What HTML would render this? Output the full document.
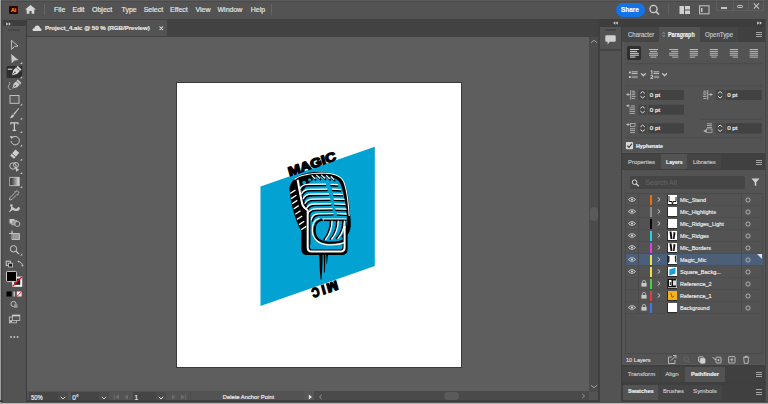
<!DOCTYPE html>
<html><head><meta charset="utf-8">
<style>
*{margin:0;padding:0;box-sizing:border-box}
html,body{width:768px;height:404px;overflow:hidden;background:#535353;font-family:"Liberation Sans",sans-serif;color:#dcdcdc}
.a{position:absolute}
.t{position:absolute;white-space:nowrap;line-height:1;-webkit-text-stroke:0.18px currentColor}
</style></head><body>
<div class="a" style="left:0;top:0;width:768px;height:404px;background:#535353"></div>

<!-- window edges -->
<div class="a" style="left:0;top:0;width:768px;height:1px;background:#5c5c5c"></div>
<div class="a" style="left:0;top:1px;width:768px;height:0.8px;background:#4a4a4a"></div>
<div class="a" style="left:0;top:0;width:1px;height:404px;background:#a0a0a0"></div>
<div class="a" style="left:1px;top:1px;width:1px;height:401px;background:#474747"></div><div class="a" style="left:2px;top:19px;width:1px;height:383px;background:#4e4e4e"></div>

<!-- MENU BAR -->
<div id="menubar">
  <div class="a" style="left:8.6px;top:6.1px;width:9.2px;height:8.4px;background:#330000;border-radius:1.2px"></div>
  <div class="t" style="left:10.9px;top:8.3px;font-size:5.2px;font-weight:bold;color:#ff9a00">Ai</div>
  <svg class="a" style="left:25.4px;top:5.4px" width="11" height="9" viewBox="0 0 11 9"><path d="M5.5 0 L11 4.6 L9.3 4.6 L9.3 8.8 L6.6 8.8 L6.6 6 L4.4 6 L4.4 8.8 L1.7 8.8 L1.7 4.6 L0 4.6 Z" fill="#d6d6d6"/></svg>
  <div class="a" style="left:44px;top:4px;width:1px;height:11px;background:#666"></div>
  <div class="t" style="left:54px;top:6px;font-size:7px;color:#e4e4e4">File</div>
  <div class="t" style="left:72.5px;top:6px;font-size:7px;color:#e4e4e4">Edit</div>
  <div class="t" style="left:92px;top:6px;font-size:7px;color:#e4e4e4">Object</div>
  <div class="t" style="left:121.5px;top:6px;font-size:7px;color:#e4e4e4">Type</div>
  <div class="t" style="left:143.7px;top:6px;font-size:7px;color:#e4e4e4">Select</div>
  <div class="t" style="left:170px;top:6px;font-size:7px;color:#e4e4e4">Effect</div>
  <div class="t" style="left:195.4px;top:6px;font-size:7px;color:#e4e4e4">View</div>
  <div class="t" style="left:217.5px;top:6px;font-size:7px;color:#e4e4e4">Window</div>
  <div class="t" style="left:250.7px;top:6px;font-size:7px;color:#e4e4e4">Help</div>
  <div class="a" style="left:271px;top:4px;width:1px;height:11px;background:#666"></div>

  <div class="a" style="left:616px;top:3px;width:29px;height:14px;background:#1473e6;border-radius:7px"></div>
  <div class="t" style="left:621.2px;top:6px;font-size:7.6px;font-weight:bold;color:#fff;transform:scaleX(0.84);transform-origin:0 0">Share</div>
  <svg class="a" style="left:648px;top:4px" width="13" height="12" viewBox="0 0 13 12"><circle cx="5.5" cy="5" r="3.6" stroke="#d0d0d0" stroke-width="1.3" fill="none"/><path d="M8 7.5 L11 10.5" stroke="#d0d0d0" stroke-width="1.5"/></svg>
  <div class="a" style="left:668px;top:4px;width:1px;height:11px;background:#606060"></div>
  <svg class="a" style="left:679px;top:5px" width="12" height="10" viewBox="0 0 12 10"><rect x="0.5" y="1" width="4.5" height="8" fill="#d0d0d0"/><rect x="6" y="1" width="5" height="3.5" fill="#d0d0d0"/><rect x="6" y="5.5" width="5" height="3.5" fill="#d0d0d0"/></svg>
  <svg class="a" style="left:699px;top:5px" width="11" height="10" viewBox="0 0 11 10"><rect x="0.6" y="0.8" width="9.4" height="8" stroke="#c8c8c8" stroke-width="1" fill="none"/><rect x="2" y="3" width="1.5" height="4" fill="#c8c8c8"/></svg>
  <div class="a" style="left:716px;top:-1px;width:48px;height:12px;border:1px solid #5e5e5e;border-top:none"></div>
  <div class="a" style="left:732.5px;top:0;width:1px;height:11px;background:#5e5e5e"></div>
  <div class="a" style="left:747.5px;top:0;width:1px;height:11px;background:#5e5e5e"></div>
  <div class="a" style="left:721.2px;top:6.9px;width:5.8px;height:1.7px;background:#c4c4c4"></div>
  <div class="a" style="left:737.1px;top:4.6px;width:6px;height:3.8px;border:1.3px solid #c4c4c4;border-radius:1.2px"></div>
  <svg class="a" style="left:752.5px;top:2.6px" width="7" height="6" viewBox="0 0 7 6"><path d="M0.8 0.4 L6 5.6 M6 0.4 L0.8 5.6" stroke="#c4c4c4" stroke-width="1.1"/></svg>
</div>



<!-- TAB BAR + CANVAS -->
<div class="a" style="left:27px;top:19px;width:571px;height:17.5px;background:#424242"></div>
<div class="a" style="left:27.3px;top:19.8px;width:140.2px;height:16.7px;background:#535353"></div>
<svg class="a" style="left:32px;top:24.6px" width="10" height="6.6" viewBox="0 0 12 8"><path d="M2.5 7.5 C0.8 7.5 0.3 6.2 0.6 5.2 C0.9 4.2 1.8 3.8 2.8 4 C3 2 4.5 0.6 6.3 0.6 C8.2 0.6 9.6 2 9.7 3.8 C11 3.9 11.7 4.9 11.6 5.9 C11.5 6.9 10.7 7.5 9.7 7.5 Z" fill="#d8d8d8"/></svg>
<div class="t" style="left:44.9px;top:24.7px;font-size:6.1px;font-weight:bold;color:#e8e8e8">Project_4.aic @ 50 % (RGB/Preview)</div>
<svg class="a" style="left:159px;top:25.8px" width="4.6" height="4.6" viewBox="0 0 5 5"><path d="M0.6 0.6 L4.4 4.4 M4.4 0.6 L0.6 4.4" stroke="#e0e0e0" stroke-width="1.1"/></svg>

<div class="a" style="left:27px;top:36.5px;width:562px;height:355px;background:#5e5e5e"></div>
<!-- artboard -->
<div class="a" style="left:176px;top:82px;width:286px;height:286px;background:#3a3a3a"></div>
<div class="a" style="left:177px;top:83px;width:284px;height:284px;background:#fff"></div>

<!-- vertical scrollbar -->
<div class="a" style="left:589px;top:36.5px;width:9px;height:355px;background:#4b4b4b"></div>
<svg class="a" style="left:590px;top:39px" width="8" height="5" viewBox="0 0 8 5"><path d="M1 3.8 L4 1.2 L7 3.8" stroke="#a8a8a8" stroke-width="0.9" fill="none"/></svg>
<div class="a" style="left:590px;top:206.5px;width:7.8px;height:14px;background:#5a5a5a;border-radius:4px"></div>
<svg class="a" style="left:590px;top:384px" width="8" height="5" viewBox="0 0 8 5"><path d="M1 1.2 L4 3.8 L7 1.2" stroke="#a8a8a8" stroke-width="0.9" fill="none"/></svg>
<div class="a" style="left:589px;top:391.5px;width:9px;height:9px;background:#535353"></div>
<div class="a" style="left:598px;top:19px;width:2px;height:383px;background:#3f3f3f"></div>

<!-- STATUS BAR -->
<div class="a" style="left:27px;top:391.2px;width:562px;height:9px;background:#4a4a4a"></div>
<div class="a" style="left:27px;top:391.2px;width:287px;height:9px;background:#535353"></div>
<div class="a" style="left:29.1px;top:392.2px;width:28.7px;height:8.4px;background:#454545"></div>
<div class="a" style="left:57.8px;top:392.2px;width:10.4px;height:8.4px;background:#4b4b4b"></div>
<div class="t" style="left:30.9px;top:395.1px;font-size:6.6px;color:#ececec;transform:scaleX(0.88);transform-origin:0 0">50%</div>
<svg class="a" style="left:59.8px;top:395.5px" width="6" height="4" viewBox="0 0 6 4"><path d="M0.8 0.8 L3 3 L5.2 0.8" stroke="#dcdcdc" stroke-width="0.9" fill="none"/></svg>
<div class="a" style="left:70.8px;top:392.2px;width:28px;height:8.4px;background:#454545"></div>
<div class="a" style="left:98.8px;top:392.2px;width:10.4px;height:8.4px;background:#4b4b4b"></div>
<div class="t" style="left:72.3px;top:395.1px;font-size:6.6px;color:#ececec">0°</div>
<svg class="a" style="left:101px;top:395.5px" width="6" height="4" viewBox="0 0 6 4"><path d="M0.8 0.8 L3 3 L5.2 0.8" stroke="#dcdcdc" stroke-width="0.9" fill="none"/></svg>
<svg class="a" style="left:113px;top:394px" width="18" height="6" viewBox="0 0 18 6"><path d="M1.3 0.5 L1.3 5.5" stroke="#6e6e6e" stroke-width="0.9"/><path d="M6 0.6 L2.5 3 L6 5.4 Z M15 0.6 L11.5 3 L15 5.4 Z" fill="#6e6e6e"/></svg>
<div class="a" style="left:133.4px;top:392.2px;width:22.8px;height:8.4px;background:#454545"></div>
<div class="a" style="left:156.2px;top:392.2px;width:9.8px;height:8.4px;background:#4b4b4b"></div>
<div class="t" style="left:134.6px;top:395.1px;font-size:6.6px;color:#ececec">1</div>
<svg class="a" style="left:158px;top:395.5px" width="6" height="4" viewBox="0 0 6 4"><path d="M0.8 0.8 L3 3 L5.2 0.8" stroke="#e8e8e8" stroke-width="1" fill="none"/></svg>
<svg class="a" style="left:171px;top:394px" width="16" height="6" viewBox="0 0 16 6"><path d="M1 0.6 L4.5 3 L1 5.4 Z M10 0.6 L13.5 3 L10 5.4 Z" fill="#6e6e6e"/><path d="M14.5 0.5 L14.5 5.5" stroke="#6e6e6e" stroke-width="0.9"/></svg>
<div class="a" style="left:190px;top:392.2px;width:1px;height:8.4px;background:#4a4a4a"></div>
<div class="t" style="left:222.8px;top:395.3px;font-size:5.8px;color:#ececec">Delete Anchor Point</div>
<div class="a" style="left:304.4px;top:391.2px;width:10px;height:9px;background:#585858"></div>
<svg class="a" style="left:307.5px;top:394px" width="5" height="6" viewBox="0 0 5 6"><path d="M0.8 0.5 L4 3 L0.8 5.5 Z" fill="#e8e8e8"/></svg>
<svg class="a" style="left:317.5px;top:393.5px" width="5" height="6" viewBox="0 0 5 6"><path d="M3.8 0.8 L1.5 3 L3.8 5.2" stroke="#a0a0a0" stroke-width="0.9" fill="none"/></svg>
<div class="a" style="left:444px;top:392.2px;width:14.5px;height:7.8px;background:#5a5a5a;border-radius:4px"></div>
<svg class="a" style="left:581px;top:393px" width="5" height="6" viewBox="0 0 5 6"><path d="M1.2 0.8 L3.5 3 L1.2 5.2" stroke="#a0a0a0" stroke-width="0.9" fill="none"/></svg>
<div class="a" style="left:0;top:400.3px;width:768px;height:2.2px;background:#3e3e3e"></div>
<div class="a" style="left:0;top:402.5px;width:768px;height:1.5px;background:#b4b4b4"></div>


<!-- RIGHT DOCK -->
<div class="a" style="left:600px;top:19px;width:168px;height:383px;background:#3f3f3f"></div>
<div class="a" style="left:600px;top:19px;width:166px;height:8px;background:#3d3d3d"></div>
<svg class="a" style="left:613.3px;top:21.2px" width="5" height="4" viewBox="0 0 5 4"><path d="M2.3 0.2 L0.2 2 L2.3 3.8 Z M4.8 0.2 L2.7 2 L4.8 3.8 Z" fill="#d0d0d0"/></svg>
<svg class="a" style="left:756.5px;top:21.2px" width="5" height="4" viewBox="0 0 5 4"><path d="M0.2 0.2 L2.3 2 L0.2 3.8 Z M2.7 0.2 L4.8 2 L2.7 3.8 Z" fill="#d0d0d0"/></svg>
<!-- collapsed column -->
<div class="a" style="left:600px;top:27px;width:21px;height:375px;background:#535353"></div>
<div class="a" style="left:605px;top:29px;width:11px;height:1.6px;background:#444"></div>
<svg class="a" style="left:605px;top:35px" width="11" height="10" viewBox="0 0 11 10"><path d="M1.3 0.3 L9.7 0.3 Q10.7 0.3 10.7 1.3 L10.7 5.8 Q10.7 6.8 9.7 6.8 L4.6 6.8 L2.6 9.8 L2.6 6.8 L1.3 6.8 Q0.3 6.8 0.3 5.8 L0.3 1.3 Q0.3 0.3 1.3 0.3 Z" fill="#d0d0d0"/></svg>
<div class="a" style="left:600px;top:49.2px;width:21px;height:1.6px;background:#444"></div>
<div class="a" style="left:621px;top:19px;width:1px;height:383px;background:#3f3f3f"></div>

<!-- right panel 1: Character/Paragraph/OpenType -->
<div class="a" style="left:622px;top:27px;width:143.5px;height:14.7px;background:#404040"></div>
<div class="a" style="left:622.2px;top:27.2px;width:36.6px;height:14.5px;background:#454545"></div>
<div class="a" style="left:658.8px;top:27.2px;width:40.8px;height:14.5px;background:#535353"></div>
<div class="a" style="left:699.6px;top:27.2px;width:38px;height:14.5px;background:#454545"></div>
<div class="t" style="left:627.7px;top:31.5px;font-size:6.4px;color:#c4c4c4;transform:scaleX(0.94);transform-origin:0 0">Character</div>
<svg class="a" style="left:661.6px;top:31.6px" width="3.6" height="5" viewBox="0 0 3.6 5"><path d="M0.5 1.9 L1.8 0.5 L3.1 1.9 M0.5 3.1 L1.8 4.5 L3.1 3.1" stroke="#b0b0b0" stroke-width="0.8" fill="none"/></svg>
<div class="t" style="left:668px;top:31.5px;font-size:6.4px;font-weight:bold;color:#f0f0f0;transform:scaleX(0.845);transform-origin:0 0">Paragraph</div>
<div class="t" style="left:704.5px;top:31.5px;font-size:6.4px;color:#c4c4c4;transform:scaleX(0.95);transform-origin:0 0">OpenType</div>
<div class="a" style="left:756px;top:31.8px;width:6px;height:5.4px;border-top:1px solid #a4a4a4;border-bottom:1px solid #a4a4a4"></div>
<div class="a" style="left:756px;top:34px;width:6px;height:1px;background:#a4a4a4"></div>
<div class="a" style="left:622px;top:41.7px;width:143.5px;height:111.6px;background:#535353"></div>


<!-- paragraph contents -->
<div class="a" style="left:623px;top:42px;width:142px;height:111px;border:1px solid #575757;border-top:none"></div>
<div class="a" style="left:627.2px;top:46px;width:13.6px;height:13.8px;background:#2f2f2f;border-radius:1.5px"></div>
<svg class="a" style="left:622px;top:42px" width="144" height="112" viewBox="622 42 144 112">
 <g fill="#dcdcdc">
  <rect x="630" y="49" width="8.9" height="1"/><rect x="630" y="50.9" width="7" height="1"/><rect x="630" y="52.8" width="8.9" height="1"/><rect x="630" y="54.7" width="8.9" height="1"/><rect x="630" y="56.6" width="5.5" height="1"/>
 </g>
 <g fill="#b8b8b8">
  <rect x="649" y="49" width="9" height="1"/><rect x="650" y="50.9" width="7" height="1"/><rect x="649" y="52.8" width="9" height="1"/><rect x="649" y="54.7" width="9" height="1"/><rect x="650.5" y="56.6" width="6" height="1"/>
  <rect x="669.2" y="49" width="9" height="1"/><rect x="671.2" y="50.9" width="7" height="1"/><rect x="669.2" y="52.8" width="9" height="1"/><rect x="669.2" y="54.7" width="9" height="1"/><rect x="672.2" y="56.6" width="6" height="1"/>
  <rect x="689.7" y="49" width="8.3" height="1"/><rect x="689.7" y="50.9" width="8.3" height="1"/><rect x="689.7" y="52.8" width="8.3" height="1"/><rect x="689.7" y="54.7" width="8.3" height="1"/><rect x="689.7" y="56.6" width="5.5" height="1"/>
  <rect x="709.8" y="49" width="8.1" height="1"/><rect x="709.8" y="50.9" width="8.1" height="1"/><rect x="709.8" y="52.8" width="8.1" height="1"/><rect x="709.8" y="54.7" width="8.1" height="1"/><rect x="711.2" y="56.6" width="5.5" height="1"/>
  <rect x="729.8" y="49" width="8.2" height="1"/><rect x="729.8" y="50.9" width="8.2" height="1"/><rect x="729.8" y="52.8" width="8.2" height="1"/><rect x="729.8" y="54.7" width="8.2" height="1"/><rect x="732.5" y="56.6" width="5.5" height="1"/>
  <rect x="749.6" y="49" width="8.4" height="1"/><rect x="749.6" y="50.9" width="8.4" height="1"/><rect x="749.6" y="52.8" width="8.4" height="1"/><rect x="749.6" y="54.7" width="8.4" height="1"/><rect x="749.6" y="56.6" width="8.4" height="1"/>
 </g>
 <rect x="625" y="63.2" width="137" height="0.9" fill="#4a4a4a"/>
 <!-- bullets -->
 <g fill="#cfcfcf">
  <rect x="629" y="71.6" width="1.8" height="1.8"/><rect x="631.6" y="71.4" width="6" height="0.9"/><rect x="631.6" y="73.2" width="6" height="0.9"/>
  <rect x="629" y="76.2" width="1.8" height="1.8"/><rect x="631.6" y="75.8" width="6" height="2.4" fill="#8e8e8e"/>
  <path d="M641 73.3 L643.4 75.6 L645.8 73.3" stroke="#d8d8d8" stroke-width="1.15" fill="none"/>
  <path d="M650.6 71.2 L651.9 70.5 L651.9 74.2" stroke="#d8d8d8" stroke-width="0.9" fill="none"/>
  <rect x="653.6" y="71.4" width="5.5" height="0.9"/><rect x="653.6" y="73.2" width="5.5" height="0.9"/>
  <path d="M650.5 75.6 Q652.7 74.4 652.7 76 Q652.7 77 650.6 78.3 L653 78.3" stroke="#d8d8d8" stroke-width="0.9" fill="none"/>
  <rect x="653.6" y="75.8" width="5.5" height="2.4" fill="#8e8e8e"/>
  <path d="M662.2 73.3 L664.6 75.6 L667 73.3" stroke="#d8d8d8" stroke-width="1.15" fill="none"/>
 </g>
 <rect x="625" y="85.4" width="137" height="0.9" fill="#4a4a4a"/>
 <!-- fields -->
 <g fill="#464646">
  <rect x="638.2" y="89.9" width="8.9" height="10"/><rect x="638.2" y="104.8" width="8.9" height="10"/><rect x="638.2" y="123.3" width="8.9" height="10.1"/>
  <rect x="715.7" y="89.9" width="9" height="10"/><rect x="715.7" y="123.3" width="9" height="10.1"/>
 </g>
 <g fill="#424242">
  <rect x="648.4" y="89.9" width="35.6" height="10" rx="0.8"/><rect x="648.4" y="104.8" width="35.6" height="10" rx="0.8"/><rect x="648.4" y="123.3" width="35.6" height="10.1" rx="0.8"/>
  <rect x="725.8" y="89.9" width="36" height="10" rx="0.8"/><rect x="725.8" y="123.3" width="36" height="10.1" rx="0.8"/>
 </g>
 <g stroke="#e4e4e4" stroke-width="0.95" fill="none">
  <path d="M640.4 93.4 L642.6 91.6 L644.8 93.4 M640.4 96.2 L642.6 98 L644.8 96.2"/>
  <path d="M640.4 108.3 L642.6 106.5 L644.8 108.3 M640.4 111.1 L642.6 112.9 L644.8 111.1"/>
  <path d="M640.4 126.8 L642.6 125 L644.8 126.8 M640.4 129.6 L642.6 131.4 L644.8 129.6"/>
  <path d="M717.9 93.4 L720.1 91.6 L722.3 93.4 M717.9 96.2 L720.1 98 L722.3 96.2"/>
  <path d="M717.9 126.8 L720.1 125 L722.3 126.8 M717.9 129.6 L720.1 131.4 L722.3 129.6"/>
 </g>
 <!-- indent icons -->
 <g fill="#bdbdbd">
  <path d="M626 94.5 L628.5 93 L628.5 96 Z"/><rect x="628" y="94.1" width="2" height="0.8"/><rect x="630.3" y="90.3" width="0.9" height="9.3"/>
  <rect x="632" y="90.8" width="3" height="0.8"/><rect x="632" y="92.6" width="3.5" height="0.8"/><rect x="632" y="94.4" width="3" height="0.8"/><rect x="632" y="96.2" width="3.5" height="0.8"/><rect x="632" y="98" width="3" height="0.8"/>

  <path d="M626 105.8 L628.5 104.3 L628.5 107.3 Z"/><rect x="628" y="105.4" width="2" height="0.8"/><rect x="631" y="105.5" width="4" height="0.8"/>
  <rect x="629.5" y="107.5" width="5.5" height="0.8"/><rect x="629.5" y="109.3" width="5.5" height="0.8"/><rect x="629.5" y="111.1" width="5.5" height="0.8"/><rect x="629.5" y="112.9" width="5.5" height="0.8"/>

  <path d="M626 124.6 L628.5 123.1 L628.5 126.1 Z"/><rect x="628" y="124.2" width="2" height="0.8"/><rect x="630.5" y="123.4" width="4.5" height="3" fill="none" stroke="#bdbdbd" stroke-width="0.7"/>
  <rect x="630" y="128.4" width="5" height="0.8"/><rect x="630" y="130.2" width="5" height="0.8"/><rect x="630" y="132" width="5" height="0.8"/>

  <rect x="703.4" y="90.8" width="3" height="0.8"/><rect x="703" y="92.6" width="3.5" height="0.8"/><rect x="703.4" y="94.4" width="3" height="0.8"/><rect x="703" y="96.2" width="3.5" height="0.8"/><rect x="703.4" y="98" width="3" height="0.8"/>
  <rect x="707.3" y="90.3" width="0.9" height="9.3"/><rect x="708.5" y="94.1" width="2.2" height="0.8"/><path d="M712.9 94.5 L710.4 93 L710.4 96 Z"/>

  <rect x="707" y="123.4" width="5" height="0.8"/><rect x="707" y="125.2" width="5" height="0.8"/><rect x="707" y="127" width="5" height="0.8"/>
  <rect x="706.5" y="129" width="5.5" height="3.3" fill="none" stroke="#bdbdbd" stroke-width="0.7"/>
  <path d="M703.3 131 L705.8 129.5 L705.8 132.5 Z"/><rect x="705.5" y="130.6" width="1.2" height="0.8"/>
 </g>
 <rect x="700" y="118.8" width="62" height="0.9" fill="#4c4c4c"/>
 <rect x="625" y="137.3" width="137" height="0.9" fill="#4a4a4a"/>
 <!-- checkbox -->
 <rect x="625.9" y="142" width="7.2" height="7.3" rx="1" fill="#d8d8d8"/>
 <path d="M627.3 145.6 L629 147.4 L631.9 143.6" stroke="#3a3a3a" stroke-width="1.1" fill="none"/>
</svg>
<div class="t" style="left:649.8px;top:91.8px;font-size:6.2px;color:#f8f8f8">0 pt</div>
<div class="t" style="left:649.8px;top:106.7px;font-size:6.2px;color:#f8f8f8">0 pt</div>
<div class="t" style="left:649.8px;top:125.3px;font-size:6.2px;color:#f8f8f8">0 pt</div>
<div class="t" style="left:727.2px;top:91.8px;font-size:6.2px;color:#f8f8f8">0 pt</div>
<div class="t" style="left:727.2px;top:125.3px;font-size:6.2px;color:#f8f8f8">0 pt</div>
<div class="t" style="left:636px;top:143px;font-size:6.2px;font-weight:bold;color:#f0f0f0;transform:scaleX(0.85);transform-origin:0 0">Hyphenate</div>


<!-- LAYERS PANEL -->
<div class="a" style="left:622.2px;top:154.4px;width:143.3px;height:15.1px;background:#404040"></div>
<div class="a" style="left:622.9px;top:154.4px;width:38.1px;height:15.1px;background:#454545"></div>
<div class="a" style="left:661px;top:154.4px;width:26.3px;height:15.1px;background:#535353"></div>
<div class="a" style="left:687.3px;top:154.4px;width:33.6px;height:15.1px;background:#454545"></div>
<div class="t" style="left:627.8px;top:158.8px;font-size:6.2px;color:#c4c4c4;transform:scaleX(0.96);transform-origin:0 0">Properties</div>
<div class="t" style="left:665.9px;top:158.8px;font-size:6.2px;font-weight:bold;color:#f0f0f0;transform:scaleX(0.84);transform-origin:0 0">Layers</div>
<div class="t" style="left:692.8px;top:158.8px;font-size:6.2px;color:#c4c4c4;transform:scaleX(0.96);transform-origin:0 0">Libraries</div>
<div class="a" style="left:755.7px;top:159.7px;width:6.4px;height:5.5px;border-top:1px solid #a4a4a4;border-bottom:1px solid #a4a4a4"></div>
<div class="a" style="left:755.7px;top:162px;width:6.4px;height:1px;background:#a4a4a4"></div>
<div class="a" style="left:622.2px;top:169.5px;width:143.3px;height:195.2px;background:#535353"></div>
<div class="a" style="left:623px;top:169.5px;width:142px;height:195px;border:1px solid #575757;border-top:none"></div>
<div class="a" style="left:629.7px;top:175.9px;width:115.3px;height:12.7px;background:#454545;border-radius:1.5px"></div>
<svg class="a" style="left:631px;top:179px" width="10" height="8" viewBox="0 0 10 8"><circle cx="3.6" cy="3.2" r="2.3" stroke="#d8d8d8" stroke-width="1" fill="none"/><path d="M5.2 4.8 L7.8 7.3" stroke="#d8d8d8" stroke-width="1.3"/></svg>
<div class="t" style="left:645.3px;top:179px;font-size:7px;color:#606060">Search All</div>
<svg class="a" style="left:751px;top:178px" width="9" height="9" viewBox="0 0 9 9"><path d="M0.5 0.5 L8.5 0.5 L5.3 4.3 L5.3 8.3 L3.7 7.3 L3.7 4.3 Z" fill="#d0d0d0"/></svg>
<div class="a" style="left:625px;top:193.3px;width:137.6px;height:161px;border:1px solid #4a4a4a"></div>

<div class="a" style="left:625.5px;top:205.0px;width:137px;height:0.8px;background:#4e4e4e"></div>
<svg class="a" style="left:627.5px;top:196.9px" width="8" height="5" viewBox="0 0 8 5"><path d="M0.4 2.5 Q4 -1.2 7.6 2.5 Q4 6.2 0.4 2.5 Z" fill="none" stroke="#d0d0d0" stroke-width="0.9"/><circle cx="4" cy="2.5" r="1.1" fill="#d0d0d0"/></svg>
<div class="a" style="left:650.4px;top:195.0px;width:1.7px;height:9.5px;background:#f26d00"></div>
<svg class="a" style="left:656.5px;top:197.0px" width="4" height="5" viewBox="0 0 4 5"><path d="M0.6 0.4 L3.1 2.5 L0.6 4.6" stroke="#d4d4d4" stroke-width="0.9" fill="none"/></svg>
<div class="a" style="left:667.4px;top:194.6px;width:10px;height:10px;background:#2a2a2a"></div>
<div class="a" style="left:668.2px;top:195.4px;width:8.4px;height:8.4px;background:#fff"></div>
<svg class="a" style="left:668.2px;top:195.4px" width="9" height="9" viewBox="0 0 9 9"><path d="M1 1 L1 6.5 L4 6.5 L4 8.4 L5 8.4 L5 6.5 L8 6.5 L8 2" stroke="#111" stroke-width="1" fill="none"/></svg>
<div class="t" style="left:680px;top:197.1px;font-size:6px;color:#ececec;transform:scaleX(0.92);transform-origin:0 0">Mic_Stand</div>
<div class="a" style="left:741.3px;top:193.5px;width:0.8px;height:11.5px;background:#4a4a4a"></div>
<svg class="a" style="left:744.8px;top:196.8px" width="6" height="6" viewBox="0 0 6 6"><circle cx="3" cy="3" r="2.1" stroke="#c8c8c8" stroke-width="0.8" fill="none"/></svg>
<div class="a" style="left:625.5px;top:217.0px;width:137px;height:0.8px;background:#4e4e4e"></div>
<svg class="a" style="left:627.5px;top:208.9px" width="8" height="5" viewBox="0 0 8 5"><path d="M0.4 2.5 Q4 -1.2 7.6 2.5 Q4 6.2 0.4 2.5 Z" fill="none" stroke="#d0d0d0" stroke-width="0.9"/><circle cx="4" cy="2.5" r="1.1" fill="#d0d0d0"/></svg>
<div class="a" style="left:650.4px;top:207.0px;width:1.7px;height:9.5px;background:#8a8a8a"></div>
<svg class="a" style="left:656.5px;top:209.0px" width="4" height="5" viewBox="0 0 4 5"><path d="M0.6 0.4 L3.1 2.5 L0.6 4.6" stroke="#d4d4d4" stroke-width="0.9" fill="none"/></svg>
<div class="a" style="left:667.4px;top:206.6px;width:10px;height:10px;background:#2a2a2a"></div>
<div class="a" style="left:668.2px;top:207.4px;width:8.4px;height:8.4px;background:#fff"></div>
<div class="t" style="left:680px;top:209.1px;font-size:6px;color:#ececec;transform:scaleX(0.92);transform-origin:0 0">Mic_Highlights</div>
<div class="a" style="left:741.3px;top:205.5px;width:0.8px;height:11.5px;background:#4a4a4a"></div>
<svg class="a" style="left:744.8px;top:208.8px" width="6" height="6" viewBox="0 0 6 6"><circle cx="3" cy="3" r="2.1" stroke="#c8c8c8" stroke-width="0.8" fill="none"/></svg>
<div class="a" style="left:625.5px;top:229.0px;width:137px;height:0.8px;background:#4e4e4e"></div>
<svg class="a" style="left:627.5px;top:220.9px" width="8" height="5" viewBox="0 0 8 5"><path d="M0.4 2.5 Q4 -1.2 7.6 2.5 Q4 6.2 0.4 2.5 Z" fill="none" stroke="#d0d0d0" stroke-width="0.9"/><circle cx="4" cy="2.5" r="1.1" fill="#d0d0d0"/></svg>
<div class="a" style="left:650.4px;top:219.0px;width:1.7px;height:9.5px;background:#0a0a0a"></div>
<svg class="a" style="left:656.5px;top:221.0px" width="4" height="5" viewBox="0 0 4 5"><path d="M0.6 0.4 L3.1 2.5 L0.6 4.6" stroke="#d4d4d4" stroke-width="0.9" fill="none"/></svg>
<div class="a" style="left:667.4px;top:218.6px;width:10px;height:10px;background:#2a2a2a"></div>
<div class="a" style="left:668.2px;top:219.4px;width:8.4px;height:8.4px;background:#fff"></div>
<div class="t" style="left:680px;top:221.1px;font-size:6px;color:#ececec;transform:scaleX(0.92);transform-origin:0 0">Mic_Ridges_Light</div>
<div class="a" style="left:741.3px;top:217.5px;width:0.8px;height:11.5px;background:#4a4a4a"></div>
<svg class="a" style="left:744.8px;top:220.8px" width="6" height="6" viewBox="0 0 6 6"><circle cx="3" cy="3" r="2.1" stroke="#c8c8c8" stroke-width="0.8" fill="none"/></svg>
<div class="a" style="left:625.5px;top:241.0px;width:137px;height:0.8px;background:#4e4e4e"></div>
<svg class="a" style="left:627.5px;top:232.9px" width="8" height="5" viewBox="0 0 8 5"><path d="M0.4 2.5 Q4 -1.2 7.6 2.5 Q4 6.2 0.4 2.5 Z" fill="none" stroke="#d0d0d0" stroke-width="0.9"/><circle cx="4" cy="2.5" r="1.1" fill="#d0d0d0"/></svg>
<div class="a" style="left:650.4px;top:231.0px;width:1.7px;height:9.5px;background:#22d3f0"></div>
<svg class="a" style="left:656.5px;top:233.0px" width="4" height="5" viewBox="0 0 4 5"><path d="M0.6 0.4 L3.1 2.5 L0.6 4.6" stroke="#d4d4d4" stroke-width="0.9" fill="none"/></svg>
<div class="a" style="left:667.4px;top:230.6px;width:10px;height:10px;background:#2a2a2a"></div>
<div class="a" style="left:668.2px;top:231.4px;width:8.4px;height:8.4px;background:#fff"></div>
<svg class="a" style="left:668.2px;top:231.4px" width="9" height="9" viewBox="0 0 9 9"><path d="M1.5 0.5 L3.5 0.5 L4.5 8 L2.5 8 Z M5.5 1 L7.5 1.5 L6.5 8 L5 8 Z" fill="#111"/></svg>
<div class="t" style="left:680px;top:233.1px;font-size:6px;color:#ececec;transform:scaleX(0.92);transform-origin:0 0">Mic_Ridges</div>
<div class="a" style="left:741.3px;top:229.5px;width:0.8px;height:11.5px;background:#4a4a4a"></div>
<svg class="a" style="left:744.8px;top:232.8px" width="6" height="6" viewBox="0 0 6 6"><circle cx="3" cy="3" r="2.1" stroke="#c8c8c8" stroke-width="0.8" fill="none"/></svg>
<div class="a" style="left:625.5px;top:253.0px;width:137px;height:0.8px;background:#4e4e4e"></div>
<svg class="a" style="left:627.5px;top:244.9px" width="8" height="5" viewBox="0 0 8 5"><path d="M0.4 2.5 Q4 -1.2 7.6 2.5 Q4 6.2 0.4 2.5 Z" fill="none" stroke="#d0d0d0" stroke-width="0.9"/><circle cx="4" cy="2.5" r="1.1" fill="#d0d0d0"/></svg>
<div class="a" style="left:650.4px;top:243.0px;width:1.7px;height:9.5px;background:#e83ae8"></div>
<svg class="a" style="left:656.5px;top:245.0px" width="4" height="5" viewBox="0 0 4 5"><path d="M0.6 0.4 L3.1 2.5 L0.6 4.6" stroke="#d4d4d4" stroke-width="0.9" fill="none"/></svg>
<div class="a" style="left:667.4px;top:242.6px;width:10px;height:10px;background:#2a2a2a"></div>
<div class="a" style="left:668.2px;top:243.4px;width:8.4px;height:8.4px;background:#fff"></div>
<svg class="a" style="left:668.2px;top:243.4px" width="9" height="9" viewBox="0 0 9 9"><path d="M1.5 0.5 L3.5 0.5 L4.5 8 L2.5 8 Z M5.5 1 L7.5 1.5 L6.5 8 L5 8 Z" fill="#111"/></svg>
<div class="t" style="left:680px;top:245.1px;font-size:6px;color:#ececec;transform:scaleX(0.92);transform-origin:0 0">Mic_Borders</div>
<div class="a" style="left:741.3px;top:241.5px;width:0.8px;height:11.5px;background:#4a4a4a"></div>
<svg class="a" style="left:744.8px;top:244.8px" width="6" height="6" viewBox="0 0 6 6"><circle cx="3" cy="3" r="2.1" stroke="#c8c8c8" stroke-width="0.8" fill="none"/></svg>
<div class="a" style="left:625.5px;top:253.5px;width:137px;height:12px;background:#4b5f78"></div>
<svg class="a" style="left:757px;top:253.5px" width="5" height="5" viewBox="0 0 5 5"><path d="M0 0 L5 0 L5 5 Z" fill="#e0e0e0"/></svg>
<div class="a" style="left:625.5px;top:265.0px;width:137px;height:0.8px;background:#4e4e4e"></div>
<svg class="a" style="left:627.5px;top:256.9px" width="8" height="5" viewBox="0 0 8 5"><path d="M0.4 2.5 Q4 -1.2 7.6 2.5 Q4 6.2 0.4 2.5 Z" fill="none" stroke="#d0d0d0" stroke-width="0.9"/><circle cx="4" cy="2.5" r="1.1" fill="#d0d0d0"/></svg>
<div class="a" style="left:650.4px;top:255.0px;width:1.7px;height:9.5px;background:#f0e040"></div>
<svg class="a" style="left:656.5px;top:257.0px" width="4" height="5" viewBox="0 0 4 5"><path d="M0.6 0.4 L3.1 2.5 L0.6 4.6" stroke="#d4d4d4" stroke-width="0.9" fill="none"/></svg>
<div class="a" style="left:667.4px;top:254.6px;width:10px;height:10px;background:#2a2a2a"></div>
<div class="a" style="left:668.2px;top:255.4px;width:8.4px;height:8.4px;background:#fff"></div>
<svg class="a" style="left:668.2px;top:255.4px" width="9" height="9" viewBox="0 0 9 9"><path d="M0 0.5 L1.6 1.5 L1.4 7 L0 8 Z M8.4 0 L6.8 1 L7 6.5 L8.4 8 Z" fill="#222"/></svg>
<div class="t" style="left:680px;top:257.1px;font-size:6px;color:#ececec;transform:scaleX(0.92);transform-origin:0 0">Magic_Mic</div>
<div class="a" style="left:741.3px;top:253.5px;width:0.8px;height:11.5px;background:#4a4a4a"></div>
<svg class="a" style="left:744.8px;top:256.8px" width="6" height="6" viewBox="0 0 6 6"><circle cx="3" cy="3" r="2.1" stroke="#c8c8c8" stroke-width="0.8" fill="none"/></svg>
<div class="a" style="left:625.5px;top:277.0px;width:137px;height:0.8px;background:#4e4e4e"></div>
<svg class="a" style="left:627.5px;top:268.9px" width="8" height="5" viewBox="0 0 8 5"><path d="M0.4 2.5 Q4 -1.2 7.6 2.5 Q4 6.2 0.4 2.5 Z" fill="none" stroke="#d0d0d0" stroke-width="0.9"/><circle cx="4" cy="2.5" r="1.1" fill="#d0d0d0"/></svg>
<div class="a" style="left:650.4px;top:267.0px;width:1.7px;height:9.5px;background:#f0e040"></div>
<svg class="a" style="left:656.5px;top:269.0px" width="4" height="5" viewBox="0 0 4 5"><path d="M0.6 0.4 L3.1 2.5 L0.6 4.6" stroke="#d4d4d4" stroke-width="0.9" fill="none"/></svg>
<div class="a" style="left:667.4px;top:266.6px;width:10px;height:10px;background:#2a2a2a"></div>
<div class="a" style="left:668.2px;top:267.4px;width:8.4px;height:8.4px;background:#fff"></div>
<svg class="a" style="left:668.2px;top:267.4px" width="9" height="9" viewBox="0 0 9 9"><path d="M1.3 2.5 L7.5 0.5 L7.5 6.5 L1.3 8.4 Z" fill="#1ba1d6"/></svg>
<div class="t" style="left:680px;top:269.1px;font-size:6px;color:#ececec;transform:scaleX(0.92);transform-origin:0 0">Square_Backg...</div>
<div class="a" style="left:741.3px;top:265.5px;width:0.8px;height:11.5px;background:#4a4a4a"></div>
<svg class="a" style="left:744.8px;top:268.8px" width="6" height="6" viewBox="0 0 6 6"><circle cx="3" cy="3" r="2.1" stroke="#c8c8c8" stroke-width="0.8" fill="none"/></svg>
<div class="a" style="left:625.5px;top:289.0px;width:137px;height:0.8px;background:#4e4e4e"></div>
<svg class="a" style="left:640.8px;top:280.1px" width="6" height="7" viewBox="0 0 6 7"><path d="M1.4 3 L1.4 2 Q1.4 0.4 3 0.4 Q4.6 0.4 4.6 2 L4.6 3" stroke="#c8c8c8" stroke-width="0.8" fill="none"/><rect x="0.4" y="3" width="5.2" height="3.6" fill="#c8c8c8"/></svg>
<div class="a" style="left:650.4px;top:279.0px;width:1.7px;height:9.5px;background:#3ad83a"></div>
<svg class="a" style="left:656.5px;top:281.0px" width="4" height="5" viewBox="0 0 4 5"><path d="M0.6 0.4 L3.1 2.5 L0.6 4.6" stroke="#d4d4d4" stroke-width="0.9" fill="none"/></svg>
<div class="a" style="left:667.4px;top:278.6px;width:10px;height:10px;background:#2a2a2a"></div>
<div class="a" style="left:668.2px;top:279.4px;width:8.4px;height:8.4px;background:#fff"></div>
<svg class="a" style="left:668.2px;top:279.4px" width="9" height="9" viewBox="0 0 9 9"><rect x="0" y="0" width="8.4" height="8.4" fill="#111"/><rect x="1" y="1" width="2.5" height="6" fill="#fff"/><rect x="5" y="1.5" width="3" height="5" fill="#ddd"/><rect x="1.8" y="3" width="1" height="3" fill="#111"/></svg>
<div class="t" style="left:680px;top:281.1px;font-size:6px;color:#ececec;transform:scaleX(0.92);transform-origin:0 0">Reference_2</div>
<div class="a" style="left:741.3px;top:277.5px;width:0.8px;height:11.5px;background:#4a4a4a"></div>
<svg class="a" style="left:744.8px;top:280.8px" width="6" height="6" viewBox="0 0 6 6"><circle cx="3" cy="3" r="2.1" stroke="#c8c8c8" stroke-width="0.8" fill="none"/></svg>
<div class="a" style="left:625.5px;top:301.0px;width:137px;height:0.8px;background:#4e4e4e"></div>
<svg class="a" style="left:640.8px;top:292.1px" width="6" height="7" viewBox="0 0 6 7"><path d="M1.4 3 L1.4 2 Q1.4 0.4 3 0.4 Q4.6 0.4 4.6 2 L4.6 3" stroke="#c8c8c8" stroke-width="0.8" fill="none"/><rect x="0.4" y="3" width="5.2" height="3.6" fill="#c8c8c8"/></svg>
<div class="a" style="left:650.4px;top:291.0px;width:1.7px;height:9.5px;background:#e83a3a"></div>
<svg class="a" style="left:656.5px;top:293.0px" width="4" height="5" viewBox="0 0 4 5"><path d="M0.6 0.4 L3.1 2.5 L0.6 4.6" stroke="#d4d4d4" stroke-width="0.9" fill="none"/></svg>
<div class="a" style="left:667.4px;top:290.6px;width:10px;height:10px;background:#2a2a2a"></div>
<div class="a" style="left:668.2px;top:291.4px;width:8.4px;height:8.4px;background:#f5b21a"></div>
<svg class="a" style="left:668.2px;top:291.4px" width="9" height="9" viewBox="0 0 9 9"><path d="M3 2 L4 6.5 L6 5" stroke="#7a4a00" stroke-width="0.8" fill="none"/></svg>
<div class="t" style="left:680px;top:293.1px;font-size:6px;color:#ececec;transform:scaleX(0.92);transform-origin:0 0">Reference_1</div>
<div class="a" style="left:741.3px;top:289.5px;width:0.8px;height:11.5px;background:#4a4a4a"></div>
<svg class="a" style="left:744.8px;top:292.8px" width="6" height="6" viewBox="0 0 6 6"><circle cx="3" cy="3" r="2.1" stroke="#c8c8c8" stroke-width="0.8" fill="none"/></svg>
<div class="a" style="left:625.5px;top:313.0px;width:137px;height:0.8px;background:#4e4e4e"></div>
<svg class="a" style="left:627.5px;top:304.9px" width="8" height="5" viewBox="0 0 8 5"><path d="M0.4 2.5 Q4 -1.2 7.6 2.5 Q4 6.2 0.4 2.5 Z" fill="none" stroke="#d0d0d0" stroke-width="0.9"/><circle cx="4" cy="2.5" r="1.1" fill="#d0d0d0"/></svg>
<svg class="a" style="left:640.8px;top:304.1px" width="6" height="7" viewBox="0 0 6 7"><path d="M1.4 3 L1.4 2 Q1.4 0.4 3 0.4 Q4.6 0.4 4.6 2 L4.6 3" stroke="#c8c8c8" stroke-width="0.8" fill="none"/><rect x="0.4" y="3" width="5.2" height="3.6" fill="#c8c8c8"/></svg>
<div class="a" style="left:650.4px;top:303.0px;width:1.7px;height:9.5px;background:#3a7ae8"></div>
<div class="a" style="left:667.4px;top:302.6px;width:10px;height:10px;background:#2a2a2a"></div>
<div class="a" style="left:668.2px;top:303.4px;width:8.4px;height:8.4px;background:#fff"></div>
<div class="t" style="left:680px;top:305.1px;font-size:6px;color:#ececec;transform:scaleX(0.92);transform-origin:0 0">Background</div>
<div class="a" style="left:741.3px;top:301.5px;width:0.8px;height:11.5px;background:#4a4a4a"></div>
<svg class="a" style="left:744.8px;top:304.8px" width="6" height="6" viewBox="0 0 6 6"><circle cx="3" cy="3" r="2.1" stroke="#c8c8c8" stroke-width="0.8" fill="none"/></svg>
<div class="a" style="left:637.5px;top:193.5px;width:0.8px;height:120px;background:#4a4a4a"></div>

<div class="t" style="left:626px;top:358px;font-size:5.6px;color:#dcdcdc">10 Layers</div>
<svg class="a" style="left:622px;top:350px" width="144" height="16" viewBox="622 350 144 16">
 <g stroke="#cfcfcf" stroke-width="0.8" fill="none">
  <path d="M672 357 L668.5 357 L668.5 363.5 L675 363.5 L675 360"/><path d="M671 360.5 L675.8 355.7 M673 355.5 L676 355.5 L676 358.5"/>
  <circle cx="686.3" cy="359" r="2.3" stroke="#6a6a6a"/><path d="M688 360.8 L690.2 363" stroke="#6a6a6a" stroke-width="1"/>
  <rect x="698.5" y="356.8" width="4.8" height="4.8" rx="0.6"/><rect x="700.2" y="358.4" width="4.8" height="4.8" rx="0.6" fill="#cfcfcf"/>
  <path d="M712.8 357 L714.8 359.5 L716 359.5"/><rect x="716" y="357.2" width="5" height="5.8" rx="0.6"/><path d="M718.5 359 L718.5 361.2 M717.4 360.1 L719.6 360.1"/>
  <rect x="728.6" y="356.6" width="6.4" height="6.4" rx="0.6"/><path d="M731.8 358.2 L731.8 361.4 M730.2 359.8 L733.4 359.8"/>
  <path d="M743 357.3 L749.3 357.3 M745 357.3 L745 356.3 L747.3 356.3 L747.3 357.3 M743.8 358.3 L744.3 363.3 L748 363.3 L748.5 358.3"/>
 </g>
</svg>
<div class="a" style="left:622.2px;top:366.5px;width:143.3px;height:15.4px;background:#404040"></div>
<div class="a" style="left:622.7px;top:366.5px;width:37.5px;height:15.4px;background:#454545"></div>
<div class="a" style="left:661px;top:366.5px;width:24.3px;height:15.4px;background:#454545"></div>
<div class="a" style="left:685.3px;top:366.5px;width:39.5px;height:15.4px;background:#535353"></div>
<div class="t" style="left:627.7px;top:371.2px;font-size:6.1px;color:#c4c4c4">Transform</div>
<div class="t" style="left:665.20px;top:371.2px;font-size:6.1px;color:#c4c4c4">Align</div>
<div class="t" style="left:690.8px;top:371.2px;font-size:6.1px;font-weight:bold;color:#f0f0f0;transform:scaleX(0.93);transform-origin:0 0">Pathfinder</div>
<div class="a" style="left:756.1px;top:371.5px;width:6.1px;height:5.5px;border-top:1px solid #a4a4a4;border-bottom:1px solid #a4a4a4"></div>
<div class="a" style="left:756.1px;top:373.8px;width:6.1px;height:1px;background:#a4a4a4"></div>
<div class="a" style="left:622.2px;top:384.5px;width:143.3px;height:15.6px;background:#404040"></div>
<div class="a" style="left:622.7px;top:384.7px;width:35.3px;height:15.4px;background:#535353"></div>
<div class="a" style="left:658px;top:384.7px;width:30.9px;height:15.4px;background:#454545"></div>
<div class="a" style="left:688.9px;top:384.7px;width:33.6px;height:15.4px;background:#454545"></div>
<div class="t" style="left:627.5px;top:388.40px;font-size:6.1px;font-weight:bold;color:#f0f0f0;transform:scaleX(0.91);transform-origin:0 0">Swatches</div>
<div class="t" style="left:662.8px;top:388.40px;font-size:6.1px;color:#c4c4c4;transform:scaleX(0.93);transform-origin:0 0">Brushes</div>
<div class="t" style="left:693.20px;top:388.40px;font-size:6.1px;color:#c4c4c4;transform:scaleX(1.02);transform-origin:0 0">Symbols</div>
<div class="a" style="left:756.1px;top:389.3px;width:6.1px;height:5.5px;border-top:1px solid #a4a4a4;border-bottom:1px solid #a4a4a4"></div>
<div class="a" style="left:756.1px;top:391.6px;width:6.1px;height:1px;background:#a4a4a4"></div>
<div class="a" style="left:765.2px;top:19px;width:1px;height:383px;background:#454545"></div>
<div class="a" style="left:766.2px;top:0;width:1.8px;height:402px;background:#525252"></div>


<!-- ARTWORK -->
<svg class="a" style="left:177px;top:83px" width="284" height="284" viewBox="177 83 284 284">
 <path d="M260.5 186.4 L374.8 146.7 L374.8 265.9 L260.5 305.9 Z" fill="#02a3d2"/>
 <!-- MAGIC -->
 <text x="0" y="0" transform="matrix(0.945,-0.327,0.27,0.963,289.4,176.3)" font-family="Liberation Sans" font-weight="bold" font-size="12.6" textLength="50" lengthAdjust="spacingAndGlyphs" fill="#000" stroke="#000" stroke-width="1.35" stroke-linejoin="round">MAGIC</text>
 <!-- MIC upside down -->
 <g transform="matrix(-0.945,0.327,-0.27,-0.963,336.6,280.4)" font-family="Liberation Sans" font-weight="bold" font-size="13" fill="#000" stroke="#000" stroke-width="1.3" stroke-linejoin="round">
  <text x="0" y="0" transform="scale(1.05,1)">M</text>
  <text x="13.4" y="0">I</text>
  <text x="0" y="0" transform="translate(19.6,0) scale(0.82,1)">C</text>
 </g>
 <!-- stand -->
 <path d="M319.2 254 L322.6 254 L322.2 270 L321.4 279.5 L320.6 279.5 L319.8 270 Z" fill="#000"/>
 <path d="M323.6 254 L325.4 254 L325 272.5 L324.2 272.5 Z" fill="#000"/>
 <path d="M326.2 254 L328 254 L327 264 L326.6 264 Z" fill="#000"/>
 <!-- head silhouette -->
 <path d="M289.3 190 C290.2 180.5 296.5 174.8 310 172.5 C323 171.2 337.5 172.6 343.8 181 C348.2 189 349.5 205 350.8 222 C351.2 228 349.5 232 347.6 235 L347.6 249 Q347.6 255 341.5 255 L307.5 255 Q301.3 255 301.3 249 L301.3 231 C296 222 291.5 208 289.5 190 Z" fill="#000"/>
 <!-- white rim along top/right -->
 <path d="M294.5 179.5 C299 175.5 308 173.4 322 173 C334 173 340.5 175.5 343.6 181.5 C346.5 188 348.2 200 349.2 216" stroke="#fff" stroke-width="1.1" fill="none"/>
 <!-- front face blue -->
 <path d="M299.2 181 C303.5 177.6 313 176.6 324 176.4 C334 176.8 339 179.6 341 185 C344 194 346.5 208 347.2 222 C347.2 228 344.5 232 342.6 235 L342.6 246.5 Q342.6 249.6 339.8 249.6 L312.6 249.6 Q309.8 249.6 309.8 246.5 L309.8 211 C306 206 302 197 298.8 180.5 Z" fill="#02a3d2"/>
 <!-- top-left dark region with dots -->
 <path d="M299 180.5 C302.5 178 307 177 312.5 176.6 L312.8 180.2 C309.5 182 307 184.5 305.4 187.5 L302 191.5 Z" fill="#000"/>
 <circle cx="304.2" cy="182.6" r="1.9" fill="#02a3d2"/>
 <circle cx="309.6" cy="179.8" r="1.5" fill="#02a3d2"/>
 <!-- top ticks -->
 <g stroke="#000" stroke-width="1.9" fill="none" stroke-linecap="round">
  <path d="M312.6 176.6 L315.6 179.8"/><path d="M317.2 176.2 L320.4 179.4"/><path d="M322.2 176.2 L325.4 179.4"/><path d="M327.2 176.6 L330.2 179.8"/><path d="M331.8 177.6 L334.6 180.6"/>
 </g>
 <g stroke="#fff" stroke-width="1.2" fill="none" stroke-linecap="round">
  <path d="M312 175.6 L314.8 178.6"/><path d="M316.6 175.2 L319.6 178.2"/><path d="M321.6 175.2 L324.6 178.2"/><path d="M326.6 175.6 L329.4 178.6"/><path d="M331.2 176.6 L333.8 179.4"/>
 </g>
 <!-- upper ridges -->
 <g stroke="#000" stroke-width="1.6" fill="none" stroke-linecap="round">
  <path d="M301.0 190.0 Q303.0 185.9 308.4 185.8 L325.4 185.5"/>
  <path d="M331.0 185.6 L337.6 186.0"/>
  <path d="M302.6 194.9 Q304.6 190.8 310.0 190.7 L327.0 190.4"/>
  <path d="M332.5 190.5 L340.7 190.9"/>
  <path d="M304.2 199.8 Q306.2 195.7 311.6 195.6 L328.7 195.3"/>
  <path d="M333.6 195.4 L342.4 195.8"/>
  <path d="M305.9 204.7 Q307.9 200.6 313.3 200.5 L329.8 200.2"/>
  <path d="M334.2 200.3 L344.0 200.7"/>
  <path d="M307.5 209.6 Q309.5 205.5 314.9 205.4 L330.9 205.1"/>
  <path d="M334.8 205.2 L345.0 205.6"/>
  <path d="M309.1 214.5 Q311.1 210.4 316.5 210.3 L332.0 210.0"/>
  <path d="M335.8 210.1 L346.0 210.5"/>
 </g>
 <g stroke="#fff" stroke-width="1.3" fill="none" stroke-linecap="round">
  <path d="M300.0 188.8 Q302.2 184.5 307.9 184.4 L325.4 184.2"/>
  <path d="M331.0 184.3 L337.6 184.7"/>
  <path d="M301.6 193.7 Q303.8 189.4 309.5 189.3 L327.0 189.1"/>
  <path d="M332.5 189.2 L340.7 189.6"/>
  <path d="M303.2 198.6 Q305.4 194.3 311.1 194.2 L328.7 194.0"/>
  <path d="M333.6 194.1 L342.4 194.5"/>
  <path d="M304.9 203.5 Q307.1 199.2 312.8 199.1 L329.8 198.9"/>
  <path d="M334.2 199.0 L344.0 199.4"/>
  <path d="M306.5 208.4 Q308.7 204.1 314.4 204.0 L330.9 203.8"/>
  <path d="M334.8 203.9 L345.0 204.3"/>
  <path d="M308.1 213.3 Q310.3 209.0 316.0 208.9 L332.0 208.7"/>
  <path d="M335.8 208.8 L346.0 209.2"/>
 </g>
 <!-- left band ticks -->
 <g stroke="#fff" stroke-width="1.3" fill="none">
  <path d="M290.3 193.4 L295.5 190.0"/>
  <path d="M291.2 198.6 L296.4 195.2"/>
  <path d="M292.1 203.8 L297.3 200.4"/>
  <path d="M293.6 209.0 L298.8 205.6"/>
  <path d="M295.3 214.2 L300.5 210.8"/>
  <path d="M297.0 219.4 L302.2 216.0"/>
  <path d="M299.0 224.6 L304.2 221.2"/>
  <path d="M301.1 229.8 L306.3 226.4"/>
 </g>
 <!-- lower grill: ridge at 213.8 -->
 <path d="M312.2 221.5 Q313.5 215.3 319 215.1 L333.5 214.8 M336.8 214.9 L346.6 215.2" stroke="#000" stroke-width="1.6" fill="none"/>
 <path d="M311 220.5 Q312 214 318 213.9 L333.5 213.6 M336.8 213.7 L346.6 214" stroke="#fff" stroke-width="1.3" fill="none"/>
 <!-- big C arc -->
 <path d="M323 219.6 C317 220 314.2 225 314.6 231.5 C315 238 320 242 328 242.6 C336 243 341 242 345 240" stroke="#000" stroke-width="2.2" fill="none"/>
 <path d="M319.5 218.3 C314 219.5 311.8 225 312.4 231.8 C313 239 318.5 244.2 328 244.8 C336 245.1 341 244.2 345 242.4" stroke="#fff" stroke-width="1.3" fill="none"/>
 <path d="M324 220.2 L346.5 220.2" stroke="#000" stroke-width="1.8" fill="none"/>
 <path d="M322 218.9 L346.5 218.9" stroke="#fff" stroke-width="0.95" fill="none"/>
 <!-- vertical curved ridges -->
 <g stroke="#000" stroke-width="1.7" fill="none" stroke-linecap="round">
  <path d="M330.6 221.4 C330.6 227 329 233 324.2 239.6"/><path d="M336.8 221.4 C336.8 227 335.2 233 330.4 239"/><path d="M343 221.4 C343 227 341.4 233 336.6 238.4"/><path d="M347.4 222.6 C347.2 227.5 346 231.5 342.4 236.6"/>
 </g>
 <g stroke="#fff" stroke-width="1.3" fill="none" stroke-linecap="round">
  <path d="M332 221.2 C332 227 330.4 233 325.6 239.6"/><path d="M338.2 221.2 C338.2 227 336.6 233 331.8 239"/><path d="M344.4 221.2 C344.4 227 342.8 233 338 238.4"/>
 </g>
 <!-- boundary + U white line -->
 <path d="M297.6 179.8 C299.5 190 301 199 302.5 204.9 C303.5 207.5 305.5 209 307.7 210.5 L307.7 247.5 Q307.7 251.6 311.5 251.6 L340.5 251.6 Q344.6 251.6 344.6 247.5 L344.6 226" stroke="#fff" stroke-width="2" fill="none"/>
 <path d="M309.9 212 L309.9 244.5" stroke="#000" stroke-width="1" fill="none"/>
</svg>

<!-- TOOLBAR -->
<div class="a" style="left:3px;top:19px;width:23px;height:383px;background:#535353"></div>
<div class="a" style="left:3px;top:19.6px;width:22.6px;height:6.6px;background:#3e3e3e"></div>
<svg class="a" style="left:6px;top:21.5px" width="5" height="4" viewBox="0 0 5 4"><path d="M0.2 0.2 L2.3 2 L0.2 3.8 Z M2.7 0.2 L4.8 2 L2.7 3.8 Z" fill="#d0d0d0"/></svg>
<div class="a" style="left:7.8px;top:28.8px;width:12.2px;height:1.9px;background:#474747"></div>
<div class="a" style="left:26px;top:19px;width:1px;height:383px;background:#3c3c3c"></div>
<svg class="a" style="left:0;top:36px" width="27" height="330" viewBox="0 36 27 330">
 <g fill="none" stroke="#c9c9c9" stroke-width="0.9">
  <!-- selection hollow -->
  <path d="M11.4 40.3 L18 46 L14.5 46.5 L11.7 49.3 Z"/>
 </g>
 <g fill="#c9c9c9">
  <path d="M11.2 54 L18.4 59.9 L14.5 60.5 L11.7 63.3 Z"/>
  <path d="M22.3 62 L22.3 64 L20 64 Z"/>
 </g>
 <!-- pen selected -->
 <rect x="6.6" y="66" width="15.6" height="11.9" rx="1" fill="#2e2e2e"/>
 <rect x="7.8" y="68.7" width="4.5" height="1.1" fill="#d8d8d8"/>
 <g transform="translate(15.4,71.8) rotate(45) scale(1.15)">
  <rect x="-2.3" y="-5.2" width="4.6" height="1.8" fill="#d8d8d8"/>
  <path d="M-2.3 -3 L2.3 -3 L2.3 0.3 L0 4.2 L-2.3 0.3 Z" fill="#d8d8d8"/>
  <path d="M0 0.3 L0 3" stroke="#2e2e2e" stroke-width="0.6"/><circle cx="0" cy="0.4" r="0.6" fill="#2e2e2e"/>
 </g>
 <path d="M22.2 76.1 L22.2 78.2 L19.9 78.2 Z" fill="#c9c9c9"/>
 <!-- curvature pen -->
 <g transform="translate(15.6,85.3) rotate(45) scale(1.1)">
  <rect x="-2.3" y="-5.2" width="4.6" height="1.8" fill="#c9c9c9"/>
  <path d="M-2.3 -3 L2.3 -3 L2.3 0.3 L0 4.2 L-2.3 0.3 Z" fill="#c9c9c9"/>
  <path d="M0 0.3 L0 3" stroke="#535353" stroke-width="0.6"/><circle cx="0" cy="0.4" r="0.6" fill="#535353"/>
 </g>
 <path d="M9.6 82 C10.5 84 8 85.5 8.3 87.5 C8.5 89 10 89.6 11.2 89.4" stroke="#c9c9c9" stroke-width="0.7" fill="none"/>
 <!-- rectangle -->
 <rect x="10" y="95.5" width="9" height="7.8" fill="#5a5a5a" stroke="#c9c9c9" stroke-width="0.9"/>
 <path d="M22.2 103.4 L22.2 105.6 L20 105.6 Z" fill="#c9c9c9"/>
 <!-- paintbrush -->
 <path d="M18.6 108 L19.2 108.6 L14.5 114.8 L13.4 113.8 Z" fill="#c9c9c9"/>
 <path d="M13 114.2 L14.2 115.3 C13.8 117.4 12 118.2 9.8 118.2 C11 117 11.2 115 13 114.2 Z" fill="#c9c9c9"/>
 <path d="M22.2 117.4 L22.2 119.6 L20 119.6 Z" fill="#c9c9c9"/>
 <!-- Type -->
 <path d="M10.3 122.3 L18.5 122.3 L18.5 124.6 L17.7 124.6 L17.4 123.4 L15 123.4 L15 129.8 L16.2 130.1 L16.2 130.9 L12.6 130.9 L12.6 130.1 L13.8 129.8 L13.8 123.4 L11.4 123.4 L11.1 124.6 L10.3 124.6 Z" fill="#d0d0d0"/>
 <path d="M22.2 130.9 L22.2 133.1 L20 133.1 Z" fill="#c9c9c9"/>
 <!-- rotate -->
 <path d="M12.4 137.5 A4.2 4.2 0 1 1 11 141" stroke="#c9c9c9" stroke-width="1" fill="none"/>
 <path d="M10 136 L13.5 136.6 L11.2 139 Z" fill="#c9c9c9"/>
 <path d="M22.2 144.4 L22.2 146.6 L20 146.6 Z" fill="#c9c9c9"/>
 <!-- eraser -->
 <path d="M15.5 149.6 L19.2 152.8 L14 158.8 L10.2 155.6 Z" fill="#d0d0d0"/>
 <path d="M12 153.6 L15.7 156.8" stroke="#535353" stroke-width="0.9"/>
 <path d="M22.2 158.4 L22.2 160.6 L20 160.6 Z" fill="#c9c9c9"/>
 <!-- shape builder -->
 <circle cx="13" cy="166" r="3.2" stroke="#c9c9c9" stroke-width="0.9" fill="none"/>
 <circle cx="16" cy="165" r="2.5" stroke="#c9c9c9" stroke-width="0.9" fill="none"/>
 <path d="M15 167 L19.5 170 L17.5 170.5 L16.5 172 Z" fill="#d0d0d0"/>
 <path d="M22.2 171.9 L22.2 174.1 L20 174.1 Z" fill="#c9c9c9"/>
 <!-- gradient -->
 <defs><linearGradient id="gr" x1="0" x2="1"><stop offset="0" stop-color="#222"/><stop offset="1" stop-color="#e0e0e0"/></linearGradient></defs>
 <rect x="9.8" y="177.3" width="9.4" height="8.4" fill="url(#gr)" stroke="#c9c9c9" stroke-width="0.8"/>
 <path d="M22.2 185.9 L22.2 188.1 L20 188.1 Z" fill="#c9c9c9"/>
 <!-- eyedropper -->
 <path d="M17 190.5 L19 192.5 L17.8 193.7 L18.3 194.2 L17.5 195 L16.9 194.5 L12 199.4 L10 200 L9.5 199.5 L10.1 197.5 L15 192.6 L14.5 192 L15.3 191.2 L15.8 191.7 Z" fill="none" stroke="#c9c9c9" stroke-width="0.8"/>
 <!-- puppet warp -->
 <circle cx="11.4" cy="205.6" r="1.3" fill="#c9c9c9"/>
 <path d="M11 207 C12.5 206.5 13.5 207.5 14.5 208.3 C15.8 209.2 17 208.4 17.8 207.4 C18.6 206.6 19.8 207.2 19.8 208.5 C19.8 210 18.5 211 16.8 211 C15 211 13.8 210.4 12.8 210 C11.8 210.6 10.6 211.6 9.4 212.2 L9 211.4 C10.2 210.4 11 209.3 11 208 Z" fill="#c9c9c9"/>
 <!-- blend/shapes -->
 <rect x="9.5" y="219" width="5" height="4.5" fill="#c9c9c9"/>
 <rect x="11.8" y="220.5" width="5" height="4.5" fill="#9a9a9a" stroke="#c9c9c9" stroke-width="0.5"/>
 <circle cx="17.3" cy="224" r="2.5" fill="#535353" stroke="#c9c9c9" stroke-width="0.9"/>
 <!-- artboard -->
 <path d="M12 231.5 L12 239.5 L19.5 239.5 L19.5 233.5 L17.5 233.5 L17.5 234 M12 233.5 L17.5 233.5" stroke="#c9c9c9" stroke-width="0.9" fill="none"/>
 <path d="M9 233.5 L12 233.5 M12 230.5 L12 233.5" stroke="#c9c9c9" stroke-width="0.9"/>
 <rect x="12.5" y="234" width="6.5" height="5" fill="#9a9a9a"/>
 <!-- zoom -->
 <circle cx="13.5" cy="248.8" r="3.2" stroke="#c9c9c9" stroke-width="1" fill="none"/>
 <path d="M15.8 251 L19 254.2" stroke="#c9c9c9" stroke-width="1.2"/>
 <path d="M22.2 253.4 L22.2 255.6 L20 255.6 Z" fill="#c9c9c9"/>
 <!-- default fill stroke -->
 <rect x="6.2" y="261.2" width="4.2" height="4.2" fill="none" stroke="#d0d0d0" stroke-width="1"/>
 <rect x="8.5" y="263.2" width="4" height="3.8" fill="#1a1a1a" stroke="#d0d0d0" stroke-width="0.8"/>
 <path d="M18.2 261.5 C20.5 261.5 22.5 263.5 22.5 266" stroke="#c9c9c9" stroke-width="0.9" fill="none"/>
 <path d="M17.5 261.5 L19 260.3 L19 262.7 Z M22.5 266.8 L21.3 265.3 L23.7 265.3 Z" fill="#c9c9c9"/>
 <!-- stroke box -->
 <rect x="12.2" y="276.6" width="10" height="10.2" fill="#f4f4f4"/>
 <rect x="14.2" y="278.6" width="6" height="6.2" fill="#1a1a1a"/>
 <path d="M12.6 286.4 L21.8 277" stroke="#e8101a" stroke-width="1.2"/>
 <!-- fill box -->
 <rect x="6.5" y="271.4" width="10" height="10.2" rx="1" fill="#000" stroke="#e0e0e0" stroke-width="0.9"/>
 <!-- color/grad/none -->
 <rect x="6.5" y="291.5" width="5" height="5" fill="#000"/>
 <rect x="11.5" y="291.5" width="3.5" height="5" fill="url(#gr)"/>
 <rect x="16.8" y="291.5" width="4.8" height="5" fill="#f0f0f0"/>
 <path d="M17 296.3 L21.5 291.7" stroke="#e8101a" stroke-width="0.9"/>
 <!-- draw mode -->
 <circle cx="13.5" cy="304" r="2.6" fill="none" stroke="#c9c9c9" stroke-width="0.9"/>
 <rect x="14" y="304.5" width="3.5" height="3.3" fill="#9a9a9a"/>
 <!-- screen mode -->
 <rect x="9.3" y="317" width="7.2" height="5.8" fill="#535353" stroke="#c9c9c9" stroke-width="0.8"/>
 <rect x="12.5" y="315" width="7.3" height="5.5" fill="#535353" stroke="#c9c9c9" stroke-width="0.8"/>
 <rect x="12.5" y="315" width="7.3" height="1.4" fill="#c9c9c9"/>
 <rect x="10" y="320.2" width="2" height="2" fill="#c9c9c9"/>
 <!-- dots -->
 <circle cx="11" cy="337" r="0.9" fill="#c9c9c9"/><circle cx="14.3" cy="337" r="0.9" fill="#c9c9c9"/><circle cx="17.6" cy="337" r="0.9" fill="#c9c9c9"/>
</svg>

</body></html>
